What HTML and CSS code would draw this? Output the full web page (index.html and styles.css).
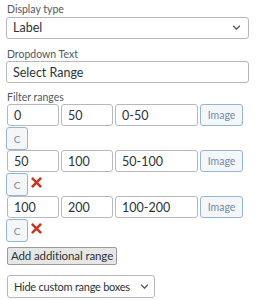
FILE: index.html
```html
<!DOCTYPE html>
<html lang="en">
<head>
    <meta charset="UTF-8">
    <meta name="viewport" content="width=device-width, initial-scale=1.0">
    <title>Range filter</title>
    <link rel="stylesheet" href="styles.css">
</head>
<body>
    <div class="form">
        <div class="field">
            <label for="display-type">Display type</label>
            <div class="select-wrap wide">
                <select id="display-type" class="select">
                    <option>Label</option>
                </select>
                <svg class="chevron" viewBox="0 0 10 6"><path d="M1 1l4 4 4-4" fill="none" stroke="#50575e" stroke-width="1.6"/></svg>
            </div>
        </div>

        <div class="field">
            <label for="dropdown-text">Dropdown Text</label>
            <input type="text" id="dropdown-text" class="text wide" value="Select Range">
        </div>

        <div class="field">
            <label>Filter ranges</label>
            <div class="ranges">
                <div class="range">
                    <input type="text" class="text num" value="0">
                    <input type="text" class="text num" value="50">
                    <input type="text" class="text name" value="0-50">
                    <button class="btn-soft image">Image</button>
                    <div class="actions">
                        <button class="btn-soft c">C</button>
                    </div>
                </div>
                <div class="range">
                    <input type="text" class="text num" value="50">
                    <input type="text" class="text num" value="100">
                    <input type="text" class="text name" value="50-100">
                    <button class="btn-soft image">Image</button>
                    <div class="actions">
                        <button class="btn-soft c">C</button>
                        <svg class="remove" viewBox="0 0 12 12"><path d="M2 2l8 8M10 2l-8 8" stroke="#c9361f" stroke-width="2.8" stroke-linecap="square"/></svg>
                    </div>
                </div>
                <div class="range">
                    <input type="text" class="text num" value="100">
                    <input type="text" class="text num" value="200">
                    <input type="text" class="text name" value="100-200">
                    <button class="btn-soft image">Image</button>
                    <div class="actions">
                        <button class="btn-soft c">C</button>
                        <svg class="remove" viewBox="0 0 12 12"><path d="M2 2l8 8M10 2l-8 8" stroke="#c9361f" stroke-width="2.8" stroke-linecap="square"/></svg>
                    </div>
                </div>
            </div>
            <button class="btn-add">Add additional range</button>
        </div>

        <div class="select-wrap hide">
            <select class="select">
                <option>Hide custom range boxes</option>
            </select>
            <svg class="chevron" viewBox="0 0 10 6"><path d="M1 1l4 4 4-4" fill="none" stroke="#50575e" stroke-width="1.6"/></svg>
        </div>
    </div>
</body>
</html>
```

FILE: styles.css
```css
body {
    margin: 0;
    padding: 3px 6px 0 6px;
    font-family: Lato, "Noto Sans", sans-serif;
    color: #2c3338;
    background: #fff;
}

.form {
    display: flex;
    flex-direction: column;
}

.field {
    display: flex;
    flex-direction: column;
    margin-bottom: 10px;
}

.field:nth-child(2) {
    margin-bottom: 8px;
}

label {
    font-size: 10.5px;
    line-height: 13px;
    color: #50575e;
    padding-left: 1px;
}

.wide {
    width: 243px;
}

.text {
    box-sizing: border-box;
    height: 22px;
    margin: 0;
    padding: 0 6px;
    font-family: inherit;
    font-size: 12.5px;
    color: #2c3338;
    border: 1px solid #b5b9bd;
    border-radius: 3px;
    background: #fff;
}

.select-wrap {
    position: relative;
    box-sizing: border-box;
    height: 22px;
}

.select {
    appearance: none;
    box-sizing: border-box;
    width: 100%;
    height: 100%;
    margin: 0;
    padding: 0 20px 0 6px;
    font-family: inherit;
    font-size: 12.5px;
    color: #2c3338;
    border: 1px solid #b5b9bd;
    border-radius: 3px;
    background: #fff;
}

.chevron {
    position: absolute;
    right: 8px;
    top: 9px;
    width: 9px;
    height: 5px;
    pointer-events: none;
}

.ranges {
    display: flex;
    flex-direction: column;
    margin-bottom: 5px;
}

.range {
    display: flex;
    flex-wrap: wrap;
    row-gap: 1px;
    column-gap: 2px;
    padding-left: 1px;
    width: 240px;
}

.range .num {
    width: 52px;
}

.range .name {
    width: 83px;
}

.btn-soft {
    box-sizing: border-box;
    margin: 0;
    padding: 0;
    font-family: inherit;
    color: #6f8db0;
    background: #f4f6f8;
    border: 1px solid #94b5d6;
    border-radius: 3px;
}

.image {
    width: 43px;
    height: 22px;
    font-size: 10.5px;
}

.actions {
    display: flex;
    align-items: flex-start;
    gap: 3px;
    width: 100%;
    height: 23px;
}

.c {
    width: 22px;
    height: 23px;
    font-size: 10px;
    margin-left: -1px;
}

.remove {
    width: 11px;
    height: 11px;
    margin-top: 4px;
}

.btn-add {
    align-self: flex-start;
    box-sizing: border-box;
    width: 110px;
    height: 18px;
    margin: 0 0 0 1px;
    padding: 0;
    font-family: inherit;
    font-size: 11.5px;
    letter-spacing: -0.1px;
    line-height: 16px;
    white-space: nowrap;
    color: #2c3338;
    background: #e6e6e6;
    border: 1px solid #9a9a9a;
    border-radius: 2px;
}

.hide {
    width: 148px;
    height: 23px;
    margin-left: 1px;
}

.hide .select {
    font-size: 11px;
    letter-spacing: -0.25px;
    padding: 0 16px 0 6px;
}

.hide .chevron {
    right: 6px;
}
```
